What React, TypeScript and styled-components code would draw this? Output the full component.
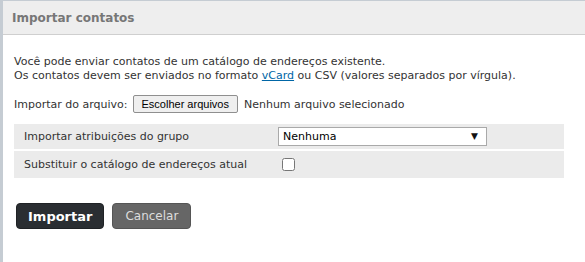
import React from 'react';
import styled, { createGlobalStyle } from 'styled-components';

const GlobalStyle = createGlobalStyle`
  html, body {
    margin: 0;
    padding: 0;
    background: #fff;
  }
  body {
    font-family: Verdana, "DejaVu Sans", sans-serif;
    font-size: 11px;
    color: #333;
  }
`;

const Frame = styled.div`
  width: 585px;
  height: 262px;
  box-sizing: border-box;
  border-left: 3px solid #c5ccd3;
  border-top: 1px solid #c5ccd3;
  display: flex;
  flex-direction: column;
`;

const Header = styled.div`
  height: 33px;
  background: #eeeeee;
  border-bottom: 1px solid #cfcfcf;
  display: flex;
  align-items: center;
  padding-left: 9px;
`;

const Title = styled.h2`
  margin: 0;
  font-size: 12px;
  font-weight: bold;
  color: #777;
`;

const Body = styled.div`
  padding: 20px 21px 0 11px;
`;

const Intro = styled.p`
  margin: 0;
  line-height: 14px;
`;

const VLink = styled.a`
  color: #0066a6;
  text-decoration: underline;
`;

const FileRow = styled.div`
  display: flex;
  align-items: center;
  gap: 5px;
  margin-top: 12px;
  height: 18px;
`;

const FileButton = styled.button`
  font-family: "Liberation Sans", Arial, sans-serif;
  font-size: 11px;
  color: #000;
  background: #efefef;
  border: 1px solid #8f8f8f;
  border-radius: 2px;
  height: 18px;
  padding: 0 8px;
  margin: 0 1px 0 0;
`;

const Options = styled.div`
  margin-top: 11px;
  display: flex;
  flex-direction: column;
  gap: 2px;
`;

const OptionRow = styled.div<{ $h: number }>`
  height: ${(p) => p.$h}px;
  background: #ebebeb;
  display: grid;
  grid-template-columns: 264px 1fr;
  align-items: center;
`;

const OptionLabel = styled.span`
  padding-left: 10px;
`;

const SelectBox = styled.div`
  position: relative;
  width: 209px;
  height: 19px;
  box-sizing: border-box;
  border: 1px solid #a9a9a9;
  background: #fff;
  display: flex;
  align-items: center;
  padding-left: 4px;
  color: #000;
`;

const Arrow = styled.span`
  position: absolute;
  right: 8px;
  top: 3px;
  font-size: 9px;
  color: #111;
`;

const Check = styled.input`
  width: 13px;
  height: 13px;
  margin: 0 0 0 4px;
`;

const Actions = styled.div`
  display: flex;
  gap: 8px;
  margin-top: 25px;
  padding-left: 2px;
`;

const Btn = styled.button<{ $primary?: boolean }>`
  font-family: Verdana, "DejaVu Sans", sans-serif;
  font-size: ${(p) => (p.$primary ? '13px' : '12px')};
  height: 26px;
  border-radius: 4px;
  padding: 0 ${(p) => (p.$primary ? '11px' : '12px')};
  cursor: pointer;
  background: ${(p) => (p.$primary ? '#2a2e32' : '#666')};
  color: ${(p) => (p.$primary ? '#fff' : '#ddd')};
  font-weight: ${(p) => (p.$primary ? 'bold' : 'normal')};
  border: 1px solid ${(p) => (p.$primary ? '#1f2225' : '#555')};
`;

export default function App() {
  return (
    <>
      <GlobalStyle />
      <Frame>
        <Header>
          <Title>Importar contatos</Title>
        </Header>
        <Body>
          <Intro>
            Você pode enviar contatos de um catálogo de endereços existente.
            <br />
            Os contatos devem ser enviados no formato <VLink href="#">vCard</VLink> ou CSV (valores separados por vírgula).
          </Intro>
          <FileRow>
            <span>Importar do arquivo:</span>
            <FileButton>Escolher arquivos</FileButton>
            <span>Nenhum arquivo selecionado</span>
          </FileRow>
          <Options>
            <OptionRow $h={25}>
              <OptionLabel>Importar atribuições do grupo</OptionLabel>
              <SelectBox>
                Nenhuma
                <Arrow>▼</Arrow>
              </SelectBox>
            </OptionRow>
            <OptionRow $h={27}>
              <OptionLabel>Substituir o catálogo de endereços atual</OptionLabel>
              <Check type="checkbox" />
            </OptionRow>
          </Options>
          <Actions>
            <Btn $primary>Importar</Btn>
            <Btn>Cancelar</Btn>
          </Actions>
        </Body>
      </Frame>
    </>
  );
}
